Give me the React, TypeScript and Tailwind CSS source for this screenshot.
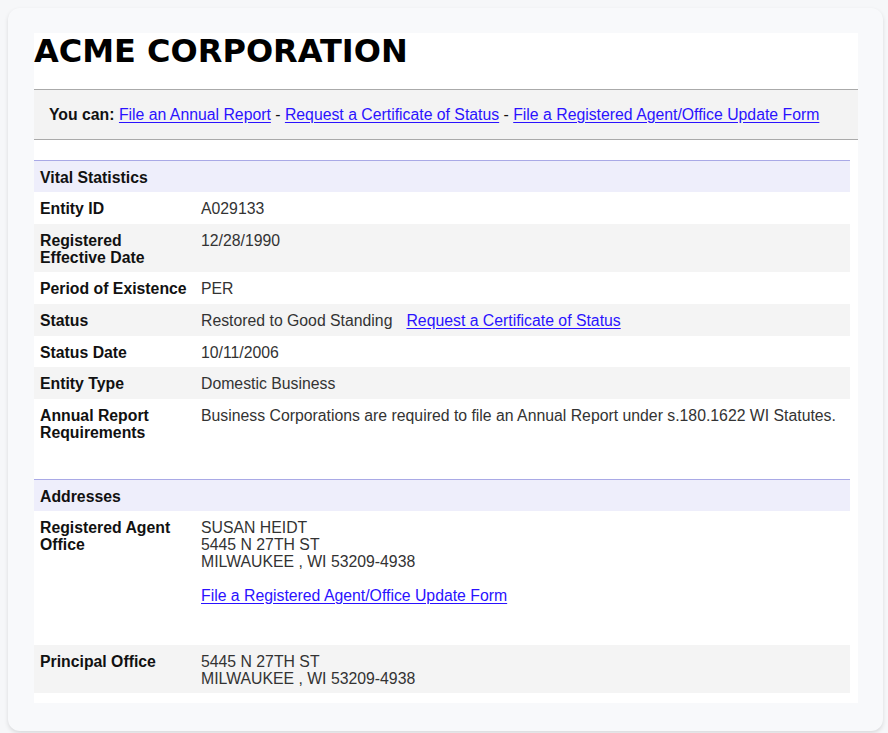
import React from "react";

const font = { fontFamily: '"Liberation Sans", Arial, sans-serif' };

function Link({ children }: { children: React.ReactNode }) {
  return (
    <a href="#" className="text-[#2a12ff] underline underline-offset-[2px]">
      {children}
    </a>
  );
}

function SectionHeader({ title }: { title: string }) {
  return (
    <div className="flex h-[32px] items-center border-t border-[#a9a9e6] bg-[#eeeefb] pl-[6px] pt-[1px] font-bold text-[#111]">
      {title}
    </div>
  );
}

function Row({
  label,
  children,
  gray,
  h,
}: {
  label: React.ReactNode;
  children: React.ReactNode;
  gray?: boolean;
  h: string;
}) {
  return (
    <div className={`flex ${h} ${gray ? "bg-[#f4f4f4]" : "bg-white"}`}>
      <div className="w-[161px] shrink-0 pl-[6px] pt-[8px] font-bold text-[#111]">{label}</div>
      <div className="flex-1 pl-[6px] pt-[8px] text-[#333]">{children}</div>
    </div>
  );
}

export default function App() {
  return (
    <div className="min-h-[733px] bg-[#f6f7f9] pl-[8px] pr-[5px] pt-[8px]" style={font}>
      <div className="rounded-[12px] bg-[#f8f9fb] pb-[28px] pl-[26px] pr-[25px] pt-[25px] shadow-[0_2px_4px_rgba(0,0,0,0.12)]">
        <div className="bg-white pb-[10px] text-[15.8px] leading-[17px]">
          <h1
            className="text-[32px] font-bold leading-[37px] text-black"
            style={{ fontFamily: '"DejaVu Sans", Verdana, sans-serif' }}
          >
            ACME CORPORATION
          </h1>
          <div className="mt-[19px] border-y border-[#aaaaaa] bg-[#f3f3f3] pb-[16px] pl-[15px] pt-[16px] text-[#111]">
            <span className="font-bold">You can:</span> <Link>File an Annual Report</Link> -{" "}
            <Link>Request a Certificate of Status</Link> -{" "}
            <Link>File a Registered Agent/Office Update Form</Link>
          </div>

          <div className="mt-[20px] w-[816px]">
            <SectionHeader title="Vital Statistics" />
            <Row label="Entity ID" h="h-[32px]">A029133</Row>
            <Row
              label={
                <>
                  Registered
                  <br />
                  Effective Date
                </>
              }
              gray
              h="h-[48px]"
            >
              12/28/1990
            </Row>
            <Row label="Period of Existence" h="h-[32px]">PER</Row>
            <Row label="Status" gray h="h-[32px]">
              Restored to Good Standing<span className="ml-[14px]"><Link>Request a Certificate of Status</Link></span>
            </Row>
            <Row label="Status Date" h="h-[31px]">10/11/2006</Row>
            <Row label="Entity Type" gray h="h-[32px]">Domestic Business</Row>
            <Row
              label={
                <>
                  Annual Report
                  <br />
                  Requirements
                </>
              }
              h="h-[80px]"
            >
              Business Corporations are required to file an Annual Report under s.180.1622 WI Statutes.
            </Row>

            <SectionHeader title="Addresses" />
            <Row
              label={
                <>
                  Registered Agent
                  <br />
                  Office
                </>
              }
              h="h-[134px]"
            >
              SUSAN HEIDT
              <br />
              5445 N 27TH ST
              <br />
              MILWAUKEE , WI 53209-4938
              <br />
              <br />
              <Link>File a Registered Agent/Office Update Form</Link>
            </Row>
            <Row label="Principal Office" gray h="h-[48px]">
              5445 N 27TH ST
              <br />
              MILWAUKEE , WI 53209-4938
            </Row>
          </div>
        </div>
      </div>
    </div>
  );
}
